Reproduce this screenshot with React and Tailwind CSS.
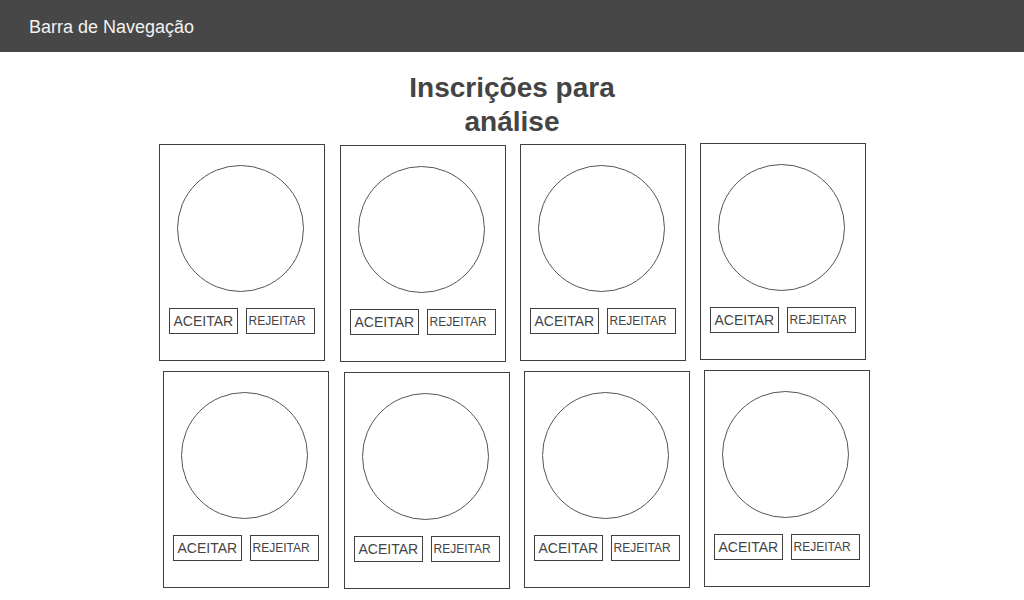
import React from "react";

function Card({ className = "" }) {
  return (
    <div
      className={
        "w-[166px] h-[217px] shrink-0 border border-[#404040] bg-white flex flex-col pt-[20px] pl-[9px] " +
        className
      }
    >
      <div className="ml-[8px] w-[127px] h-[127px] rounded-full border border-[#555555]" />
      <div className="mt-[16px] flex gap-[8px]">
        <div className="w-[69px] h-[26px] border border-[#404040] flex items-center pl-[4px] text-[14px] text-[#444444] leading-none">
          ACEITAR
        </div>
        <div className="w-[69px] h-[26px] border border-[#404040] flex items-center pl-[2px] text-[12px] text-[#444444] leading-none">
          REJEITAR
        </div>
      </div>
    </div>
  );
}

export default function App() {
  return (
    <div
      className="w-[1024px] h-[600px] bg-white overflow-hidden"
      style={{ fontFamily: '"Liberation Sans", Arial, sans-serif' }}
    >
      <div className="h-[52px] bg-[#474747] flex items-center pl-[29px] pt-[3px]">
        <span className="text-[18px] text-[#f2f2f2]">Barra de Navegação</span>
      </div>
      <div className="flex flex-col items-center">
        <h1 className="mt-[19px] w-[250px] text-center text-[28px] leading-[1.2] font-bold text-[#444444]">
          Inscrições para análise
        </h1>
        <div className="mt-[5px] flex items-start">
          <Card className="mt-[1px]" />
          <Card className="mt-[2px] ml-[15px]" />
          <Card className="mt-[1px] ml-[14px]" />
          <Card className="ml-[14px]" />
        </div>
        <div className="mt-[8px] ml-[8px] flex items-start">
          <Card className="mt-[1px]" />
          <Card className="mt-[2px] ml-[15px]" />
          <Card className="mt-[1px] ml-[14px]" />
          <Card className="ml-[14px]" />
        </div>
      </div>
    </div>
  );
}
